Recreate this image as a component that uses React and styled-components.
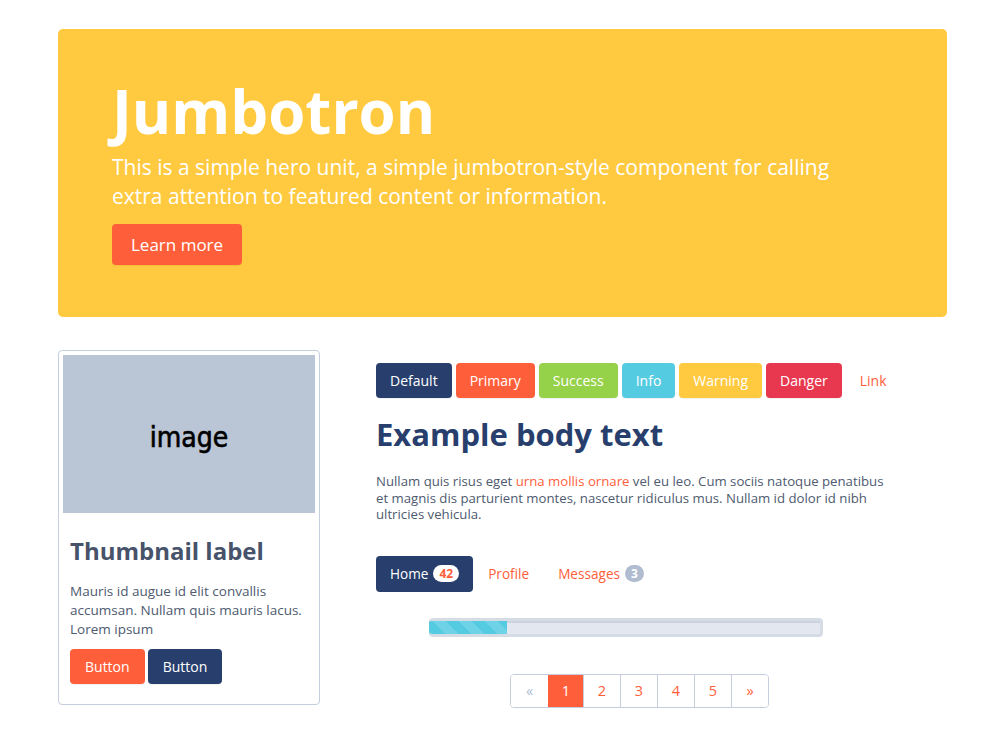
import React from "react";
import styled, { createGlobalStyle, css } from "styled-components";

const Global = createGlobalStyle`
  html, body { margin: 0; padding: 0; background: #fff; }
  body { font-family: "Open Sans", "Noto Sans", sans-serif; color: #4e5a6f; }
  * { box-sizing: border-box; }
`;

const C = {
  navy: "#283f6e",
  orange: "#ff5e3a",
  green: "#96d14a",
  info: "#55cbe2",
  yellow: "#ffca3f",
  danger: "#e8384f",
  text: "#4e5a6f",
  border: "#c5cedc",
};

const Page = styled.div`
  width: 889px;
  margin: 29px 0 0 58px;
`;

const Jumbotron = styled.section`
  background: ${C.yellow};
  border-radius: 5px;
  padding: 49px 54px 52px;
  color: #fff;
`;

const JumboTitle = styled.h1`
  margin: 0 0 9px;
  font-size: 60px;
  line-height: 66px;
  font-weight: 700;
`;

const JumboText = styled.p`
  margin: 0 0 13px;
  font-size: 21px;
  line-height: 29px;
  font-weight: 400;
  max-width: 740px;
`;

const btnColors = {
  default: C.navy,
  primary: C.orange,
  success: C.green,
  info: C.info,
  warning: C.yellow,
  danger: C.danger,
};

const Btn = styled.button`
  font-family: inherit;
  border: none;
  border-radius: 4px;
  color: #fff;
  cursor: pointer;
  background: ${(p) => btnColors[p.$v] || "transparent"};
  font-size: 14px;
  height: 35px;
  padding: 0 14px;
  box-shadow: 0 1px 1px rgba(0, 0, 0, 0.06);
  ${(p) =>
    p.$v === "link" &&
    css`
      color: ${C.orange};
      box-shadow: none;
    `}
  ${(p) =>
    p.$lg &&
    css`
      font-size: 17px;
      height: 41px;
      padding: 0 19px;
    `}
`;

const ThumbBtn = styled(Btn)`
  padding: 0 15px;
`;

const Row = styled.div`
  display: flex;
  align-items: flex-start;
  gap: 56px;
  margin-top: 33px;
`;

const Thumbnail = styled.div`
  width: 262px;
  border: 1px solid ${C.border};
  border-radius: 4px;
  padding: 4px 4px 20px;
`;

const ImageBox = styled.div`
  height: 158px;
  background: #bac5d6;
  display: flex;
  align-items: center;
  justify-content: center;
  font-family: "DejaVu Sans Condensed", "DejaVu Sans", sans-serif;
  font-stretch: condensed;
  font-size: 28px;
  -webkit-text-stroke: 0.6px #000;
  color: #000;
  padding-top: 6px;
`;

const Caption = styled.div`
  padding: 23px 7px 0;
`;

const ThumbTitle = styled.h3`
  margin: 0 0 16px;
  font-size: 24px;
  line-height: 30px;
  font-weight: 700;
  color: #47536a;
`;

const ThumbText = styled.p`
  margin: 0 0 10px;
  font-size: 13.5px;
  line-height: 19px;
`;

const BtnRow = styled.div`
  display: flex;
  gap: 3px;
`;

const Right = styled.div`
  flex: 1;
  padding-top: 13px;
`;

const ButtonBar = styled.div`
  display: flex;
  gap: 4px;
`;

const Heading = styled.h2`
  margin: 19px 0 21px;
  font-size: 31px;
  line-height: 35px;
  font-weight: 700;
  color: ${C.navy};
`;

const Body = styled.p`
  margin: 0;
  font-size: 13.2px;
  line-height: 16.5px;
  max-width: 515px;
`;

const Link = styled.a`
  color: ${C.orange};
  text-decoration: none;
`;

const Nav = styled.ul`
  list-style: none;
  margin: 33px 0 0;
  padding: 0;
  display: flex;
  gap: 1px;
`;

const NavItem = styled.li`
  height: 36px;
  padding: 0 14px;
  border-radius: 4px;
  display: flex;
  align-items: center;
  gap: 5px;
  font-size: 13.6px;
  background: ${(p) => (p.$active ? C.navy : "transparent")};
  color: ${(p) => (p.$active ? "#fff" : C.orange)};
`;

const Badge = styled.span`
  display: inline-flex;
  align-items: center;
  justify-content: center;
  min-width: 18px;
  height: 17px;
  padding: 0 6px;
  border-radius: 9px;
  font-size: 12px;
  font-weight: 700;
  background: ${(p) => (p.$light ? "#fff" : "#b0bccf")};
  color: ${(p) => (p.$light ? C.orange : "#fff")};
`;

const Progress = styled.div`
  margin: 26px 0 0 53px;
  width: 394px;
  height: 19px;
  border-radius: 4px;
  background: #e3e8f0;
  border: 3px solid #d6dce6;
  border-left: none;
  box-shadow: inset 0 2px 0 #cdd3de;
  overflow: hidden;
  display: flex;
`;

const Bar = styled.div`
  background-color: ${C.info};
  background-image: linear-gradient(
    45deg,
    rgba(255, 255, 255, 0.15) 25%,
    transparent 25%,
    transparent 50%,
    rgba(255, 255, 255, 0.15) 50%,
    rgba(255, 255, 255, 0.15) 75%,
    transparent 75%,
    transparent
  );
  background-size: 26px 26px;
  border-radius: 4px 0 0 4px;
  margin: -3px 0;
  height: calc(100% + 6px);
`;

const Pagination = styled.ul`
  list-style: none;
  margin: 37px 0 0 134px;
  padding: 0;
  display: inline-flex;
  border: 1px solid ${C.border};
  border-radius: 4px;
  overflow: hidden;
`;

const PageCell = styled.li`
  width: ${(p) => (p.$w ? p.$w : 37)}px;
  height: 32px;
  display: flex;
  align-items: center;
  justify-content: center;
  font-size: 14.5px;
  border-left: ${(p) => (p.$first ? "none" : `1px solid ${C.border}`)};
  background: ${(p) => (p.$active ? C.orange : "#fff")};
  color: ${(p) => (p.$active ? "#fff" : p.$disabled ? "#b0bccf" : C.orange)};
  ${(p) => p.$active && css`border-left-color: ${C.orange};`}
`;

export default function App() {
  const pages = ["1", "2", "3", "4", "5"];
  return (
    <>
      <Global />
      <Page>
        <Jumbotron>
          <JumboTitle>Jumbotron</JumboTitle>
          <JumboText>
            This is a simple hero unit, a simple jumbotron-style component for calling extra
            attention to featured content or information.
          </JumboText>
          <Btn $v="primary" $lg>
            Learn more
          </Btn>
        </Jumbotron>
        <Row>
          <Thumbnail>
            <ImageBox>image</ImageBox>
            <Caption>
              <ThumbTitle>Thumbnail label</ThumbTitle>
              <ThumbText>
                Mauris id augue id elit convallis accumsan. Nullam quis mauris lacus. Lorem
                ipsum
              </ThumbText>
              <BtnRow>
                <ThumbBtn $v="primary">Button</ThumbBtn>
                <ThumbBtn $v="default">Button</ThumbBtn>
              </BtnRow>
            </Caption>
          </Thumbnail>
          <Right>
            <ButtonBar>
              <Btn $v="default">Default</Btn>
              <Btn $v="primary">Primary</Btn>
              <Btn $v="success">Success</Btn>
              <Btn $v="info">Info</Btn>
              <Btn $v="warning">Warning</Btn>
              <Btn $v="danger">Danger</Btn>
              <Btn $v="link">Link</Btn>
            </ButtonBar>
            <Heading>Example body text</Heading>
            <Body>
              Nullam quis risus eget <Link href="#">urna mollis ornare</Link> vel eu leo. Cum
              sociis natoque penatibus et magnis dis parturient montes, nascetur ridiculus mus.
              Nullam id dolor id nibh ultricies vehicula.
            </Body>
            <Nav>
              <NavItem $active>
                Home <Badge $light>42</Badge>
              </NavItem>
              <NavItem>Profile</NavItem>
              <NavItem>
                Messages <Badge>3</Badge>
              </NavItem>
            </Nav>
            <Progress>
              <Bar style={{ width: "20%" }} />
            </Progress>
            <Pagination>
              <PageCell $first $disabled>
                «
              </PageCell>
              {pages.map((n, i) => (
                <PageCell key={n} $active={i === 0} $w={i === 0 ? 35 : 37}>
                  {n}
                </PageCell>
              ))}
              <PageCell>»</PageCell>
            </Pagination>
          </Right>
        </Row>
      </Page>
    </>
  );
}
